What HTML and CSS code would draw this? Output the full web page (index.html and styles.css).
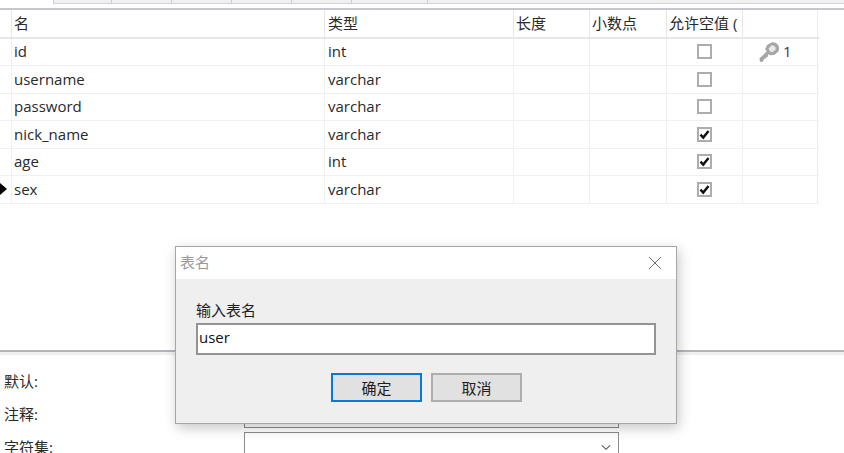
FILE: index.html
```html
<!DOCTYPE html>
<html lang="zh">
<head>
<meta charset="utf-8">
<title>表名</title>
<link rel="stylesheet" href="styles.css">
</head>
<body>
<div class="page">
  <div class="tabs">
    <span class="tab-blank"></span>
    <span class="tab first"></span><span class="tab"></span><span class="tab"></span><span class="tab"></span><span class="tab"></span><span class="tab wide"></span><span class="tab-rest"></span>
  </div>
  <div class="grid-area">
    <div class="fields">
      <div class="row head">
        <div class="mark"></div><div class="cell">名</div><div class="cell">类型</div><div class="cell">长度</div><div class="cell">小数点</div><div class="cell clip">允许空值 (</div><div class="cell"></div>
      </div>
      <div class="row">
        <div class="mark"></div><div class="cell">id</div><div class="cell">int</div><div class="cell"></div><div class="cell"></div><div class="cell center"><span class="check"></span></div>
        <div class="cell keycell">
          <svg class="key" viewBox="0 0 20 20" width="20" height="20" aria-hidden="true"><path d="M0.8 16.6 L8 9.6 L6.6 7 L8.6 3 L13.4 0.6 L17.2 1.4 L19.8 4.6 L19.2 9.2 L15.4 12.4 L11.4 12.8 L9.8 11.8 L8.6 13 L8.6 14.4 L7 14.4 L7 16 L5.4 16 L3.4 19.4 L1.4 19.4 Z" fill="#a8a8a8" stroke="#8e8e8e" stroke-width=".6"/><path d="M9 6.4 L13 2.6 L16.8 4.4 L17.2 7.8 L13.8 10.4 L10.6 10 Z" fill="#e8e8e8" stroke="#9a9a9a" stroke-width=".7"/></svg>
          <span>1</span>
        </div>
      </div>
      <div class="row">
        <div class="mark"></div><div class="cell">username</div><div class="cell">varchar</div><div class="cell"></div><div class="cell"></div><div class="cell center"><span class="check"></span></div><div class="cell"></div>
      </div>
      <div class="row">
        <div class="mark"></div><div class="cell">password</div><div class="cell">varchar</div><div class="cell"></div><div class="cell"></div><div class="cell center"><span class="check"></span></div><div class="cell"></div>
      </div>
      <div class="row">
        <div class="mark"></div><div class="cell">nick_name</div><div class="cell">varchar</div><div class="cell"></div><div class="cell"></div><div class="cell center"><span class="check"><svg viewBox="0 0 12 12" width="11" height="11" aria-hidden="true"><path d="M1.6 6.2 L4.6 9.4 L10.4 2.2" fill="none" stroke="#111" stroke-width="2.6"/></svg></span></div><div class="cell"></div>
      </div>
      <div class="row">
        <div class="mark"></div><div class="cell">age</div><div class="cell">int</div><div class="cell"></div><div class="cell"></div><div class="cell center"><span class="check"><svg viewBox="0 0 12 12" width="11" height="11" aria-hidden="true"><path d="M1.6 6.2 L4.6 9.4 L10.4 2.2" fill="none" stroke="#111" stroke-width="2.6"/></svg></span></div><div class="cell"></div>
      </div>
      <div class="row">
        <div class="mark"><span class="arrow"></span></div><div class="cell">sex</div><div class="cell">varchar</div><div class="cell"></div><div class="cell"></div><div class="cell center"><span class="check"><svg viewBox="0 0 12 12" width="11" height="11" aria-hidden="true"><path d="M1.6 6.2 L4.6 9.4 L10.4 2.2" fill="none" stroke="#111" stroke-width="2.6"/></svg></span></div><div class="cell"></div>
      </div>
    </div>
  </div>
  <div class="props">
    <div class="prop"><span class="prop-label">默认:</span><div class="prop-field plain"></div></div>
    <div class="prop"><span class="prop-label">注释:</span><div class="prop-field box"></div><span class="side-btn"></span></div>
    <div class="prop"><span class="prop-label">字符集:</span><div class="prop-field box select"><svg viewBox="0 0 12 8" width="10" height="7" aria-hidden="true"><path d="M1 1.5 L6 6 L11 1.5" fill="none" stroke="#606060" stroke-width="1.3"/></svg></div></div>
  </div>
</div>

<div class="dialog" role="dialog">
  <div class="titlebar">
    <span class="title">表名</span>
    <svg class="close" viewBox="0 0 14 14" width="14" height="14" aria-hidden="true"><path d="M1 1 L13 13 M13 1 L1 13" stroke="#6e6e6e" stroke-width="1" fill="none"/></svg>
  </div>
  <div class="dialog-body">
    <label class="dialog-label">输入表名</label>
    <div class="input">user</div>
    <div class="buttons">
      <button class="btn primary">确定</button>
      <button class="btn">取消</button>
    </div>
  </div>
</div>
</body>
</html>
```
FILE: styles.css
```css
* { box-sizing: border-box; }
html, body { margin: 0; padding: 0; width: 844px; height: 453px; overflow: hidden; background: #fff; }
body { font-family: "Open Sans", "Noto Sans CJK SC", sans-serif; font-size: 15px; color: #2a2a2a; position: relative; }
.page { display: flex; flex-direction: column; height: 453px; }

.tabs { display: flex; height: 10px; background: #fff; border-bottom: 2px solid #c6c6cc; flex: none; }
.tab-blank { width: 53px; height: 4px; }
.tab { width: 60px; height: 4px; background: #f0f0f0; border-left: 1px solid #cfcfcf; border-bottom: 1px solid #d4d4d4; }
.tab.first { width: 58px; }
.tab.wide { width: 76px; }
.tab-rest { flex: 1; height: 4px; background: #f0f0f0; border-left: 1px solid #cfcfcf; border-bottom: 1px solid #d4d4d4; }

.grid-area { height: 342px; flex: none; border-bottom: 2px solid #b4b4ba; }
.fields { width: 819px; display: flex; flex-direction: column; }
.row { display: grid; grid-template-columns: 11px 313px 189px 76px 77px 76px 76px; height: 27.5px; border-bottom: 1px solid #f0f0f0; }
.row.head { height: 28.5px; border-bottom: 2px solid #e6e6e6; }
.cell { display: flex; align-items: center; padding-left: 2px; border-left: 1px solid #f0f0f0; white-space: nowrap; overflow: hidden; line-height: 1; }
.cell:nth-child(3) { padding-left: 3px; }
.head .cell { border-left-color: #e6e6e6; }
.cell:last-child { border-right: 1px solid #ececec; }
.mark { display: flex; align-items: center; }
.arrow { width: 0; height: 0; border-left: 7px solid #000; border-top: 6.5px solid transparent; border-bottom: 6.5px solid transparent; }
.center { justify-content: center; padding-left: 0; }
.check { width: 15px; height: 15px; border: 2px solid #adadad; background: #fff; display: flex; align-items: center; justify-content: center; }
.keycell { padding-left: 16px; gap: 4px; color: #3a3a3a; }
.key { flex: none; }

.props { flex: 1; display: flex; flex-direction: column; background: #fff; border-top: 3px solid #f0f0f0; padding-top: 9px; overflow: hidden; }
.prop { display: flex; align-items: center; height: 33px; flex: none; }
.prop-label { width: 244px; padding-left: 4px; flex: none; }
.prop-field { width: 375px; height: 26px; flex: none; margin-top: 2px; }
.prop-field.box { border: 1px solid #8c8c8c; background: #fff; }
.prop:nth-child(3) .prop-field { height: 32px; }
.select { display: flex; justify-content: flex-end; align-items: center; padding-right: 7px; }
.side-btn { width: 24px; height: 26px; margin: -6px 0 0 6px; border-bottom: 1px solid #dcdcdc; }

.dialog { position: absolute; left: 175px; top: 246px; width: 502px; height: 177.5px; background: #efefef; border: 1px solid #a6a6a6; box-shadow: 2px 4px 12px rgba(0,0,0,.22); display: flex; flex-direction: column; }
.titlebar { height: 32px; background: #fff; display: flex; align-items: center; justify-content: space-between; padding: 0 14px 0 4px; flex: none; }
.title { color: #9a9a9a; font-size: 15px; line-height: 30px; height: 32px; }
.dialog-body { flex: 1; padding: 21px 20px 0; display: flex; flex-direction: column; }
.dialog-label { line-height: 20px; height: 20px; color: #1e1e1e; }
.input { margin-top: 3px; width: 460px; height: 32px; background: #fff; border: 2px solid #949494; padding-left: 1px; line-height: 25px; color: #111; }
.buttons { display: flex; gap: 9px; margin-top: 18px; padding-left: 135px; }
.btn { width: 91px; height: 29px; padding: 0; background: #e1e1e1; border: 2px solid #adadad; font: inherit; color: #1e1e1e; }
.btn.primary { border-color: #0a78d7; }
```
